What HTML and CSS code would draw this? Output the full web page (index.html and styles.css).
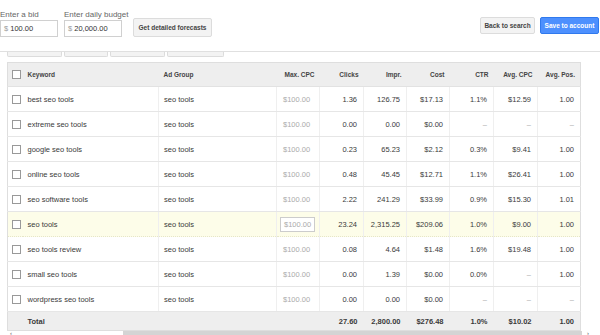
FILE: index.html
```html
<!DOCTYPE html>
<html lang="en">
<head>
    <meta charset="UTF-8">
    <meta name="viewport" content="width=device-width, initial-scale=1.0">
    <title>Keyword forecasts</title>
    <link rel="stylesheet" href="styles.css">
</head>
<body>
    <div class="top">
        <div class="fields">
            <div class="field">
                <label>Enter a bid</label>
                <div class="input"><span class="cur">$</span> 100.00</div>
            </div>
            <div class="field">
                <label>Enter daily budget</label>
                <div class="input"><span class="cur">$</span> 20,000.00</div>
            </div>
            <button class="btn btn-forecast">Get detailed forecasts</button>
        </div>
        <div class="actions">
            <button class="btn">Back to search</button>
            <button class="btn btn-blue">Save to account</button>
        </div>
    </div>

    <div class="tabs">
        <span class="tab t1"></span>
        <span class="tab t2"></span>
        <span class="tab t3"></span>
        <span class="tab t4"></span>
    </div>

    <table class="grid">
        <colgroup>
            <col class="c-chk">
            <col class="c-kw">
            <col class="c-ag">
            <col class="c-n">
            <col class="c-n2">
            <col class="c-n">
            <col class="c-n">
            <col class="c-n2">
            <col class="c-n2">
            <col class="c-n">
        </colgroup>
        <thead>
            <tr>
                <th><span class="chk"></span></th>
                <th class="l">Keyword</th>
                <th class="l">Ad Group</th>
                <th>Max. CPC</th>
                <th>Clicks</th>
                <th>Impr.</th>
                <th>Cost</th>
                <th>CTR</th>
                <th>Avg. CPC</th>
                <th>Avg. Pos.</th>
            </tr>
        </thead>
        <tbody>
            <tr>
                <td><span class="chk"></span></td><td class="l">best seo tools</td><td class="l">seo tools</td>
                <td class="bid">$100.00</td><td>1.36</td><td>126.75</td><td>$17.13</td><td>1.1%</td><td>$12.59</td><td>1.00</td>
            </tr>
            <tr>
                <td><span class="chk"></span></td><td class="l">extreme seo tools</td><td class="l">seo tools</td>
                <td class="bid">$100.00</td><td>0.00</td><td>0.00</td><td>$0.00</td><td class="na">–</td><td class="na">–</td><td class="na">–</td>
            </tr>
            <tr>
                <td><span class="chk"></span></td><td class="l">google seo tools</td><td class="l">seo tools</td>
                <td class="bid">$100.00</td><td>0.23</td><td>65.23</td><td>$2.12</td><td>0.3%</td><td>$9.41</td><td>1.00</td>
            </tr>
            <tr>
                <td><span class="chk"></span></td><td class="l">online seo tools</td><td class="l">seo tools</td>
                <td class="bid">$100.00</td><td>0.48</td><td>45.45</td><td>$12.71</td><td>1.1%</td><td>$26.41</td><td>1.00</td>
            </tr>
            <tr>
                <td><span class="chk"></span></td><td class="l">seo software tools</td><td class="l">seo tools</td>
                <td class="bid">$100.00</td><td>2.22</td><td>241.29</td><td>$33.99</td><td>0.9%</td><td>$15.30</td><td>1.01</td>
            </tr>
            <tr class="hover">
                <td><span class="chk"></span></td><td class="l">seo tools</td><td class="l">seo tools</td>
                <td class="bid"><span class="bid-box">$100.00</span></td><td>23.24</td><td>2,315.25</td><td>$209.06</td><td>1.0%</td><td>$9.00</td><td>1.00</td>
            </tr>
            <tr>
                <td><span class="chk"></span></td><td class="l">seo tools review</td><td class="l">seo tools</td>
                <td class="bid">$100.00</td><td>0.08</td><td>4.64</td><td>$1.48</td><td>1.6%</td><td>$19.48</td><td>1.00</td>
            </tr>
            <tr>
                <td><span class="chk"></span></td><td class="l">small seo tools</td><td class="l">seo tools</td>
                <td class="bid">$100.00</td><td>0.00</td><td>1.39</td><td>$0.00</td><td>0.0%</td><td class="na">–</td><td>1.00</td>
            </tr>
            <tr>
                <td><span class="chk"></span></td><td class="l">wordpress seo tools</td><td class="l">seo tools</td>
                <td class="bid">$100.00</td><td>0.00</td><td>0.00</td><td>$0.00</td><td class="na">–</td><td class="na">–</td><td class="na">–</td>
            </tr>
        </tbody>
        <tfoot>
            <tr>
                <td></td><td class="l">Total</td><td></td><td></td>
                <td>27.60</td><td>2,800.00</td><td>$276.48</td><td>1.0%</td><td>$10.02</td><td>1.00</td>
            </tr>
        </tfoot>
    </table>

    <div class="hscroll">
        <span class="arrow arrow-l">‹</span>
        <span class="thumb"></span>
        <span class="arrow arrow-r">›</span>
    </div>
</body>
</html>
```

FILE: styles.css
```css
* {
    margin: 0;
    padding: 0;
    box-sizing: border-box;
}
html, body {
    overflow: hidden;
}
body {
    font-family: "Liberation Sans", Arial, sans-serif;
    color: #3a3a3a;
    background: #fff;
}

/* top bar */
.top {
    height: 52px;
    display: flex;
    justify-content: space-between;
    border-bottom: 1px solid #e0e0e0;
}
.fields {
    display: flex;
    align-items: flex-end;
    height: 37px;
}
.field {
    width: 58px;
    margin-right: 6px;
}
.field label {
    display: block;
    font-size: 8px;
    line-height: 9px;
    color: #666;
    margin-bottom: 1px;
    white-space: nowrap;
}
.input {
    height: 17px;
    border: 1px solid #d0d0d0;
    font-size: 7.5px;
    line-height: 15px;
    padding-left: 3px;
    color: #333;
    white-space: nowrap;
}
.input .cur {
    color: #999;
}
.btn {
    font-family: inherit;
    font-weight: bold;
    font-size: 6.5px;
    color: #444;
    background: #f3f3f3;
    border: 1px solid #dcdcdc;
    border-radius: 2px;
    height: 17px;
    padding: 0;
    white-space: nowrap;
}
.btn-forecast {
    margin-left: 5px;
    width: 79px;
    height: 19px;
}
.actions {
    display: flex;
    gap: 5px;
    padding-top: 17px;
    padding-right: 1px;
}
.actions .btn:first-child {
    width: 55px;
}
.btn-blue {
    width: 59px;
    background: #4d90fe;
    border-color: #3079ed;
    color: #fff;
}

/* cut-off buttons under the bar */
.tabs {
    display: flex;
    gap: 2px;
    padding-left: 7px;
    height: 5px;
}
.tab {
    height: 5px;
    background: #f3f3f3;
    border: 1px solid #dcdcdc;
    border-top: 0;
    border-radius: 0 0 2px 2px;
}
.t1 { width: 55px; }
.t2 { width: 44px; }
.t3 { width: 55px; }
.t4 { width: 57px; }

/* grid */
.grid {
    margin: 5px 0 0 7px;
    width: 574px;
    table-layout: fixed;
    border-collapse: collapse;
    border: 1px solid #dedede;
    font-size: 7.5px;
}
.c-chk { width: 15px; }
.c-kw { width: 136px; }
.c-ag { width: 118px; }
.c-n { width: 43px; }
.c-n2 { width: 44px; }

.grid th {
    height: 24px;
    background: #eeeeee;
    font-size: 6.5px;
    font-weight: bold;
    color: #444;
    text-align: right;
    padding-right: 5px;
    border-bottom: 1px solid #e2e2e2;
}
.grid td {
    height: 25px;
    text-align: right;
    padding-right: 6px;
    white-space: nowrap;
    border-bottom: 1px solid #e6e6e6;
    border-left: 1px solid #efefef;
}
.grid th.l,
.grid td.l {
    text-align: left;
    padding-left: 5px;
}
.grid th:first-child,
.grid td:first-child {
    padding: 0 0 0 4px;
    text-align: left;
    border-left: 0;
}
.grid td:nth-child(2) {
    border-left: 0;
}
.grid td.bid {
    text-align: left;
    padding-left: 6px;
    color: #aaa;
}
.grid td.na {
    color: #aaa;
}
.chk {
    display: block;
    width: 9px;
    height: 9px;
    border: 1px solid #999;
    background: #fff;
}
.hover td {
    background: #fdfde9;
    border-bottom: 1px dotted #e6e6c8;
}
.bid-box {
    display: inline-block;
    margin-left: -3px;
    padding: 2px 3px;
    border: 1px solid #ccc;
    background: #fff;
    line-height: 9px;
}
.grid tfoot td {
    height: 19px;
    background: #eeeeee;
    font-weight: bold;
    border-left: 0;
    border-bottom: 0;
}

/* horizontal scroller */
.hscroll {
    display: flex;
    align-items: flex-start;
    height: 5px;
}
.arrow {
    flex-shrink: 0;
    font-size: 6px;
    line-height: 5px;
    height: 5px;
    color: #555;
}
.arrow-l {
    width: 123px;
    padding-left: 10px;
}
.thumb {
    flex-shrink: 0;
    width: 459px;
    height: 5px;
    background: #d4d4d4;
}
.arrow-r {
    padding-left: 5px;
}
```
